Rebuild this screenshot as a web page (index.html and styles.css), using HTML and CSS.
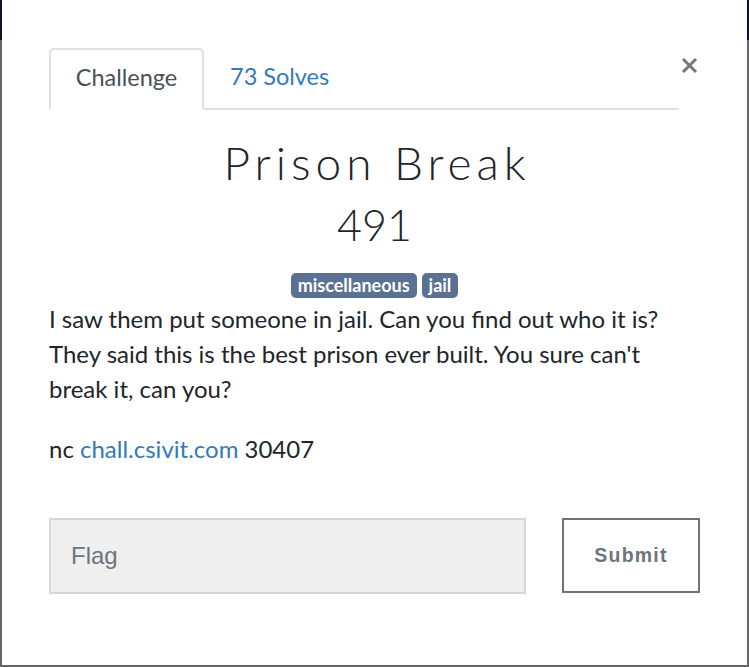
FILE: index.html
```html
<!DOCTYPE html>
<html>
<head>
<meta charset="utf-8">
<link rel="stylesheet" href="styles.css">
</head>
<body>
<div class="backdrop">
  <div class="modal">
    <div class="head">
      <div class="tabs">
        <div class="tab active">Challenge</div>
        <div class="tab link">73 Solves</div>
        <div class="tabline"></div>
      </div>
      <div class="close">
        <svg width="17" height="17" viewBox="0 0 17 17"><path d="M2 2 L15 15 M15 2 L2 15" stroke="#777" stroke-width="3" stroke-linecap="butt"/></svg>
      </div>
    </div>
    <h1 class="title">Prison Break</h1>
    <div class="value">491</div>
    <div class="tags">
      <span class="badge">miscellaneous</span>
      <span class="badge">jail</span>
    </div>
    <div class="desc">
      <p>I saw them put someone in jail. Can you find out who it is? They said this is the best prison ever built. You sure can't break it, can you?</p>
      <p>nc <a class="lnk">chall.csivit.com</a> 30407</p>
    </div>
    <div class="form">
      <div class="input">Flag</div>
      <div class="btn">Submit</div>
    </div>
  </div>
</div>
</body>
</html>
```
FILE: styles.css
```css
html, body { margin: 0; padding: 0; }
body {
  width: 749px;
  height: 667px;
  overflow: hidden;
  background: linear-gradient(to bottom, #0b1528 0, #0b1528 40px, #666 40px, #666 100%);
  font-family: Lato, "Noto Sans", sans-serif;
}
.backdrop {
  height: 667px;
  box-sizing: border-box;
  padding: 0 2px 2px 2px;
  display: flex;
}
.modal {
  flex: 1;
  background: #fff;
  padding: 48px 47px 0 47px;
  box-sizing: border-box;
  color: #212529;
}
.head {
  display: flex;
  align-items: flex-start;
}
.tabs {
  display: flex;
  align-items: stretch;
  width: 630px;
  height: 62px;
}
.tab {
  font-size: 23.5px;
  display: flex;
  align-items: center;
  padding: 0 25px 0 26px;
  box-sizing: border-box;
  border-bottom: 2px solid #dee2e6;
  padding-bottom: 4px;
}
.tab.active {
  color: #495057;
  border: 2px solid #dee2e6;
  border-bottom-color: transparent;
  border-radius: 5px 5px 0 0;
  width: 155px;
  justify-content: center;
  padding: 0 0 4px 0;
}
.tab.link { color: #337ab7; }
.tabline { flex: 1; border-bottom: 2px solid #dee2e6; }
.close {
  margin-left: 2px;
  margin-top: 9px;
  width: 17px;
  height: 17px;
}
.close svg { display: block; }
.title {
  margin: 25px 0 0 0;
  text-align: center;
  font-weight: 300;
  font-size: 46px;
  letter-spacing: 5px;
  padding-left: 5px;
  line-height: 56px;
  color: #212529;
}
.value {
  text-align: center;
  font-size: 43px;
  font-weight: 300;
  line-height: 48px;
  margin-top: 10px;
  color: #212529;
}
.tags {
  display: flex;
  justify-content: center;
  gap: 5px;
  margin-top: 24px;
}
.badge {
  background: #5a7191;
  color: #fff;
  font-weight: 700;
  font-size: 18px;
  line-height: 25px;
  height: 25px;
  padding: 0 7px;
  border-radius: 5px;
}
.desc {
  margin-top: 3px;
  font-size: 24px;
  line-height: 35px;
  color: #212529;
}
.desc p { margin: 0 0 25px 0; }
.lnk { color: #337ab7; text-decoration: none; }
.form {
  display: flex;
  margin-top: 52px;
  gap: 36px;
}
.input {
  width: 477px;
  height: 76px;
  box-sizing: border-box;
  background: #efefef;
  border: 2px solid #d3d8dd;
  font-family: "Liberation Sans", Arial, sans-serif;
  font-size: 24px;
  color: #6c757d;
  display: flex;
  align-items: center;
  padding-left: 20px;
}
.btn {
  width: 138px;
  height: 75px;
  box-sizing: border-box;
  border: 2px solid #6c757d;
  color: #6c757d;
  font-family: "Liberation Sans", Arial, sans-serif;
  font-weight: 700;
  font-size: 19.5px;
  letter-spacing: 1.2px;
  display: flex;
  align-items: center;
  justify-content: center;
}
```
